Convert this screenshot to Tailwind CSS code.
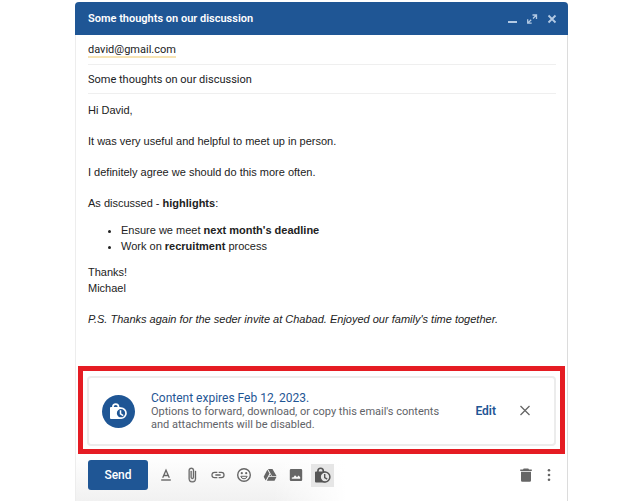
<!DOCTYPE html>
<html lang="en">

<head>
    <meta charset="UTF-8">
    <meta name="viewport" content="width=device-width, initial-scale=1.0">
    <title>Some thoughts on our discussion</title>
    <script src="https://cdn.jsdelivr.net/npm/@tailwindcss/browser@4"></script>
</head>

<body class="bg-white font-['Roboto',sans-serif] text-[11px] text-[#202124]">
    <main class="flex min-h-dvh flex-col pt-[2px] pr-[72px] pb-[1px] pl-[75px]">
        <section class="flex grow flex-col rounded-t border-x border-[#dcdcdc] border-l-[#ededed]">

            <!-- Title bar -->
            <header class="-mx-px flex h-[33px] items-center rounded-t bg-[#1f5695] pr-[10px] pl-[13px] text-white">
                <h1 class="grow leading-[17px] font-semibold">Some thoughts on our discussion</h1>
                <div class="flex gap-2 text-[#b4cae4]">
                    <button type="button" aria-label="Minimize" class="size-3">
                        <svg viewBox="0 0 12 12" class="size-3" fill="currentColor"><path d="M2 8h9v2H2z" /></svg>
                    </button>
                    <button type="button" aria-label="Full screen" class="size-3">
                        <svg viewBox="0 0 12 12" class="size-3" fill="none" stroke="currentColor" stroke-width="1.3"><path d="M6.5 2h4v4M10.2 2.3 7 5.500M5.700 10.200h-4v-4M2 9.900l3.200-3.200" /></svg>
                    </button>
                    <button type="button" aria-label="Close" class="size-3">
                        <svg viewBox="0 0 12 12" class="size-3" fill="none" stroke="currentColor" stroke-width="1.8"><path d="m2.500 2.500 7 7m0-7-7 7" /></svg>
                    </button>
                </div>
            </header>

            <!-- Recipient and subject -->
            <div class="mr-[11px] ml-3 flex h-[30px] items-center border-b border-[#efefef] pt-[2px]">
                <a href="mailto:david@gmail.com" class="border-b-2 border-[#f6e3b4] leading-3">david@gmail.com</a>
            </div>
            <div class="mr-[11px] ml-3 flex h-[29px] items-center border-b border-[#efefef] pt-[2px]">
                <input type="text" aria-label="Subject" value="Some thoughts on our discussion" class="w-full outline-none">
            </div>

            <!-- Message -->
            <div class="grow px-3 pt-2 font-['Liberation_Sans',sans-serif] leading-4 text-[#222]">
                <p class="mb-[15px]">Hi David,</p>
                <p class="mb-[15px]">It was very useful and helpful to meet up in person.</p>
                <p class="mb-[15px]">I definitely agree we should do this more often.</p>
                <p class="mb-[11px]">As discussed - <b>highlights</b>:</p>
                <ul class="mb-[10px] list-disc pl-[33px]">
                    <li>Ensure we meet <b>next month's deadline</b></li>
                    <li>Work on <b>recruitment</b> process</li>
                </ul>
                <p class="mb-[15px]">Thanks!<br>Michael</p>
                <p><i>P.S. Thanks again for the seder invite at Chabad. Enjoyed our family's time together.</i></p>
            </div>

            <!-- Confidential mode notice -->
            <div class="mx-[2px] border-[5px] border-[#e51c23] px-1 pt-[5px] pb-[3px]">
                <div class="flex h-[70px] items-center rounded border-2 border-[#ececec] pr-[22px] pl-[13px]">
                    <svg viewBox="0 0 33 33" class="size-[33px] shrink-0">
                        <circle cx="16.5" cy="16.5" r="16.5" fill="#1f5695" />
                        <path d="M10.900 14v-2.100a2.800 2.800 0 0 1 5.600 0V14" fill="none" stroke="#fff" stroke-width="1.700" />
                        <path d="M9 12h9.500v12H9a1 1 0 0 1-1-1V13a1 1 0 0 1 1-1z" fill="#fff" />
                        <circle cx="19" cy="18.200" r="5" fill="#1f5695" stroke="#fff" stroke-width="1.700" />
                        <path d="M18.500 15.200v3.700l2.700 1.800" fill="none" stroke="#fff" stroke-width="1.500" />
                    </svg>
                    <div class="ml-4 grow leading-[13px] text-[#5f6368]">
                        <h2 class="text-[12px] leading-[13px] text-[#1f5695]">Content expires Feb 12, 2023.</h2>
                        <p>Options to forward, download, or copy this email's contents<br>and attachments will be disabled.</p>
                    </div>
                    <button type="button" class="mr-[22px] text-[12px] font-semibold text-[#1f5695]">Edit</button>
                    <button type="button" aria-label="Remove expiration">
                        <svg viewBox="0 0 14 14" class="size-[14px]" fill="none" stroke="#666" stroke-width="1.3"><path d="m2.500 2 9 9m0-9-9 9" /></svg>
                    </button>
                </div>
            </div>

            <!-- Toolbar -->
            <footer class="flex h-[47px] items-center bg-linear-to-b from-white to-[#f1f1f1] pb-[5px] text-[#666]">
                <div class="-mb-[5px] flex h-[47px] grow items-center bg-linear-to-r from-transparent from-40% to-white to-55% pr-[12px] pb-[5px] pl-3">
                    <button type="button" class="mr-[7px] h-[30px] w-[60px] rounded-[3px] bg-[#1f5695] text-[12px] font-medium text-white">Send</button>
                    <div class="flex grow items-center gap-1">
                        <button type="button" aria-label="Formatting options" class="grid size-[22px] place-items-center">
                            <svg viewBox="0 0 16 16" class="size-4" fill="none" stroke="currentColor"><path d="M4.700 10.800 8 3.200l3.300 7.600M5.800 8.500h4.400" stroke-width="1.300" /><path d="M3.200 13h9.600" stroke-width="1.400" /></svg>
                        </button>
                        <button type="button" aria-label="Attach files" class="grid size-[22px] place-items-center">
                            <svg viewBox="0 0 24 24" class="size-4" fill="currentColor"><path d="M16.500 6v11.500a4 4 0 0 1-8 0V5a2.500 2.500 0 0 1 5 0v10.500a1 1 0 0 1-2 0V6H10v9.500a2.500 2.500 0 0 0 5 0V5a4 4 0 0 0-8 0v12.500a5.500 5.500 0 0 0 11 0V6z" stroke="currentColor" stroke-width=".5" /></svg>
                        </button>
                        <button type="button" aria-label="Insert link" class="grid size-[22px] place-items-center">
                            <svg viewBox="0 0 24 24" class="size-4" fill="currentColor"><path d="M3.900 12c0-1.710 1.390-3.100 3.100-3.100h4V7H7a5 5 0 0 0 0 10h4v-1.900H7c-1.710 0-3.100-1.390-3.100-3.100zM8 13h8v-2H8zm9-6h-4v1.900h4a3.100 3.100 0 0 1 0 6.200h-4V17h4a5 5 0 0 0 0-10z" /></svg>
                        </button>
                        <button type="button" aria-label="Insert emoji" class="grid size-[22px] place-items-center">
                            <svg viewBox="0 0 16 16" class="size-4" fill="none" stroke="currentColor" stroke-width="1.400"><circle cx="8" cy="8" r="6.300" /><path d="M4.800 9.300h6.400a3.300 3.300 0 0 1-6.400 0z" stroke-width="1" /><g fill="currentColor" stroke="none"><circle cx="5.800" cy="6.200" r="1.100" /><circle cx="10.200" cy="6.200" r="1.100" /></g></svg>
                        </button>
                        <button type="button" aria-label="Insert from Drive" class="grid size-[22px] place-items-center">
                            <svg viewBox="0 0 24 24" class="size-4" fill="currentColor"><path d="M8 4 2.500 14.700l3 5.600 5.800-10.500zM10.200 14.800l-3 5.700h11.600l3-5.700zM21.800 13.500 15.700 3H9l6 10.500zM12.500 10.800 11 13.500h3z" /></svg>
                        </button>
                        <button type="button" aria-label="Insert photo" class="grid size-[22px] place-items-center">
                            <svg viewBox="0 0 16 16" class="size-4" fill="currentColor"><path fill-rule="evenodd" d="M3 2h10a1.200 1.200 0 0 1 1.200 1.200v9.600A1.200 1.200 0 0 1 13 14H3a1.200 1.200 0 0 1-1.200-1.200V3.200A1.200 1.200 0 0 1 3 2zm.8 9.800h8.400v-1.500L10.600 8.600 9 10.200 7 8.300 5.500 10.300l-1.700.2z" /></svg>
                        </button>
                        <button type="button" aria-label="Confidential mode" class="grid size-[23px] place-items-center bg-[#e6e6e6] text-[#555]">
                            <svg viewBox="0 0 17 17" class="size-[17px]">
                                <path d="M3.900 5V3.900a2.700 2.700 0 0 1 5.400 0V5" fill="none" stroke="currentColor" stroke-width="1.600" />
                                <path d="M2 4.500h9.500v11H2a1 1 0 0 1-1-1v-9a1 1 0 0 1 1-1z" fill="currentColor" />
                                <circle cx="11" cy="10" r="4.900" fill="#e6e6e6" stroke="currentColor" stroke-width="1.500" />
                                <path d="M10.700 7v3.500l2.500 1.600" fill="none" stroke="currentColor" stroke-width="1.400" />
                            </svg>
                        </button>
                    </div>
                    <button type="button" aria-label="Discard draft" class="mr-[9px]">
                        <svg viewBox="0 0 16 16" class="size-4" fill="currentColor"><path d="M5.700 1.500h4.600l.7.900h2.800v1.500H2.200V2.400H5zM3 4.700h10v8.800a1.300 1.300 0 0 1-1.300 1.300H4.300A1.300 1.300 0 0 1 3 13.500z" /></svg>
                    </button>
                    <button type="button" aria-label="More options">
                        <svg viewBox="0 0 12 16" class="h-4 w-3" fill="currentColor"><circle cx="6" cy="3.300" r="1.300" /><circle cx="6" cy="8" r="1.300" /><circle cx="6" cy="12.700" r="1.300" /></svg>
                    </button>
                </div>
            </footer>
        </section>
    </main>
</body>

</html>
